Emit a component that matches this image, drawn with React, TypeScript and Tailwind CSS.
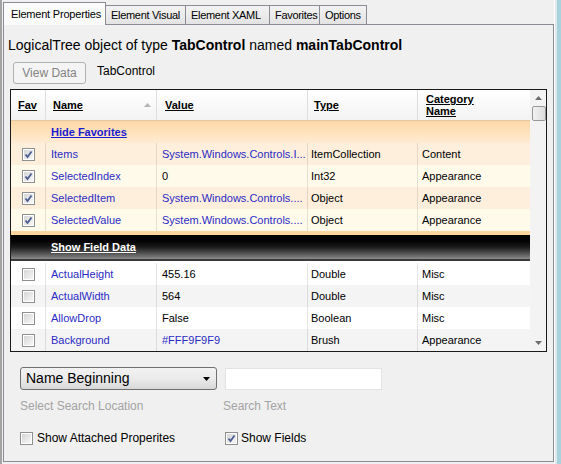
import React from "react";

type Row = {
  name: string;
  value: string;
  valueLink?: boolean;
  type: string;
  category: string;
  checked: boolean;
  bg: string;
};

const favRows: Row[] = [
  { name: "Items", value: "System.Windows.Controls.I...", valueLink: true, type: "ItemCollection", category: "Content", checked: true, bg: "bg-[#fdefdc]" },
  { name: "SelectedIndex", value: "0", type: "Int32", category: "Appearance", checked: true, bg: "bg-[#fffaea]" },
  { name: "SelectedItem", value: "System.Windows.Controls....", valueLink: true, type: "Object", category: "Appearance", checked: true, bg: "bg-[#fdefdc]" },
  { name: "SelectedValue", value: "System.Windows.Controls....", valueLink: true, type: "Object", category: "Appearance", checked: true, bg: "bg-[#fffaea]" },
];

const fieldRows: Row[] = [
  { name: "ActualHeight", value: "455.16", type: "Double", category: "Misc", checked: false, bg: "bg-white" },
  { name: "ActualWidth", value: "564", type: "Double", category: "Misc", checked: false, bg: "bg-[#f4f4f4]" },
  { name: "AllowDrop", value: "False", type: "Boolean", category: "Misc", checked: false, bg: "bg-white" },
  { name: "Background", value: "#FFF9F9F9", valueLink: true, type: "Brush", category: "Appearance", checked: false, bg: "bg-[#f4f4f4]" },
];

const CheckBox = ({ checked }: { checked: boolean }) => (
  <span className="w-[13px] h-[13px] border border-[#8e8f8f] bg-white p-[1px] flex shrink-0">
    <span className="flex-1 bg-gradient-to-br from-[#d6d6d6] to-[#f7f7f7] flex items-center justify-center">
      {checked && (
        <svg width="9" height="9" viewBox="0 0 9 9">
          <path d="M1.5 4.5 L3.5 7 L7.5 1.5" fill="none" stroke="#4b5c92" strokeWidth="1.8" />
        </svg>
      )}
    </span>
  </span>
);

const Tab = ({ label, w }: { label: string; w: string }) => (
  <div className={`${w} h-[19px] border border-l-0 border-b-0 border-[#898c95] bg-gradient-to-b from-[#f3f3f3] to-[#e3e3e3] pl-[5px] leading-[18px] text-[11px] tracking-[-0.3px] whitespace-nowrap overflow-hidden text-black`}>
    {label}
  </div>
);

const DataRow = ({ r }: { r: Row }) => (
  <div className={`flex h-[22px] items-center ${r.bg} text-[11px]`}>
    <div className="w-[35px] h-full flex items-center justify-center border-r border-black/10">
      <CheckBox checked={r.checked} />
    </div>
    <div className="w-[111px] h-full flex items-center pl-[5px] border-r border-black/10 text-[#2b2bc4]">{r.name}</div>
    <div className={`w-[151px] h-full flex items-center pl-[5px] border-r border-black/10 ${r.valueLink ? "text-[#2b2bc4]" : "text-black"}`}>
      {r.value}
    </div>
    <div className="w-[110px] h-full flex items-center pl-[3px] border-r border-black/10">{r.type}</div>
    <div className="w-[112px] h-full flex items-center pl-[4px]">{r.category}</div>
  </div>
);

const App = () => {
  return (
    <div className="w-[561px] h-[464px] bg-[#f0f0f0] flex overflow-hidden font-['Liberation_Sans',Arial,sans-serif] text-black">
      <div className="w-[2px] bg-[#a3a3a3]" />
      <div className="w-[552px] flex flex-col pl-[1px]">
        {/* tab strip */}
        <div className="h-[24px] flex items-end">
          <div className="w-[103px] h-[23px] border border-b-0 border-[#898c95] bg-[#fbfbfb] pl-[7px] pt-[3px] text-[11px] tracking-[-0.2px] whitespace-nowrap relative z-10 -mb-[1px]">
            Element Properties
          </div>
          <Tab label="Element Visual" w="w-[80px]" />
          <Tab label="Element XAML" w="w-[84px]" />
          <Tab label="Favorites" w="w-[50px]" />
          <Tab label="Options" w="w-[47px]" />
        </div>

        {/* tab page */}
        <div className="flex-1 mb-[2px] border border-[#898c95] bg-[#f0f0f0] flex flex-col pl-[4px]">
          <div className="mt-[10px] h-[20px] leading-[20px] text-[14px] whitespace-nowrap">
            LogicalTree object of type <b>TabControl</b> named <b>mainTabControl</b>
          </div>

          <div className="mt-[7px] h-[22px] flex items-center">
            <div className="ml-[5px] w-[73px] h-[22px] border border-[#adb2b5] rounded-[3px] bg-[#f4f4f4] flex items-center justify-center text-[12px] text-[#838383]">
              View Data
            </div>
            <div className="ml-[11px] -mt-[4px] text-[12px]">TabControl</div>
          </div>

          {/* grid */}
          <div className="mt-[5px] ml-[2px] w-[537px] h-[263px] border border-[#1a1a1a] bg-white flex">
            <div className="w-[519px] flex flex-col">
              <div className="h-[31px] flex bg-gradient-to-b from-white to-[#f3f3f3] border-b border-[#e2c9a3] text-[11px] font-bold underline">
                <div className="w-[35px] pl-[7px] flex items-center border-r border-[#dedede]">Fav</div>
                <div className="w-[111px] pl-[7px] flex items-center border-r border-[#dedede] relative">
                  Name
                  <svg className="absolute right-[5px] top-[13px]" width="7" height="4" viewBox="0 0 7 4">
                    <path d="M0 4 L3.5 0 L7 4 Z" fill="#b4b4b4" />
                  </svg>
                </div>
                <div className="w-[151px] pl-[8px] flex items-center border-r border-[#dedede]">Value</div>
                <div className="w-[110px] pl-[6px] flex items-center border-r border-[#dedede]">Type</div>
                <div className="w-[112px] pl-[8px] flex flex-col justify-center leading-[12px]">
                  <span>Category </span>
                  <span>Name</span>
                </div>
              </div>

              <div className="h-[22px] bg-gradient-to-b from-[#fcd8a6] to-[#ffebd2] flex items-center pl-[40px] text-[11px] font-bold underline text-[#1b1bd0]">
                Hide Favorites
              </div>
              {favRows.map((r) => (
                <DataRow key={r.name} r={r} />
              ))}

              <div className="h-[4px] bg-[#fcd69e]" />
              <div className="h-[24px] bg-gradient-to-b from-black via-[#1a1a1a] to-[#8c8c8c] flex items-center pl-[40px] text-[11px] font-bold underline text-white">
                Show Field Data
              </div>
              <div className="h-[2px] bg-[#3a3a3a]" />
              <div className="h-[2px] bg-white" />

              {fieldRows.map((r) => (
                <DataRow key={r.name} r={r} />
              ))}
            </div>

            {/* scrollbar */}
            <div className="w-[16px] bg-[#f3f3f3] flex flex-col items-center">
              <div className="h-[16px] w-full flex items-center justify-center">
                <svg width="7" height="4" viewBox="0 0 7 4">
                  <path d="M0 4 L3.5 0 L7 4 Z" fill="#6c6c6c" />
                </svg>
              </div>
              <div className="w-[14px] h-[15px] ml-[1px] border border-[#979797] rounded-[2px] bg-gradient-to-r from-[#f2f2f2] to-[#dcdcdc]" />
              <div className="flex-1" />
              <div className="h-[16px] w-full flex items-center justify-center">
                <svg width="7" height="4" viewBox="0 0 7 4">
                  <path d="M0 0 L3.5 4 L7 0 Z" fill="#6c6c6c" />
                </svg>
              </div>
            </div>
          </div>

          {/* search area */}
          <div className="mt-[15px] flex items-center">
            <div className="ml-[12px] w-[197px] h-[23px] border border-[#707070] rounded-[3px] bg-gradient-to-b from-[#f2f2f2] via-[#ebebeb] to-[#d8d8d8] flex items-center pl-[5px] pr-[6px] text-[14px]">
              <span className="flex-1">Name Beginning</span>
              <svg width="7" height="4" viewBox="0 0 7 4">
                <path d="M0 0 L3.5 4 L7 0 Z" fill="#000" />
              </svg>
            </div>
            <div className="ml-[8px] w-[157px] h-[22px] border border-[#e3e3e3] bg-white" />
          </div>

          <div className="mt-[9px] h-[14px] flex items-center text-[12px] text-[#a3a3a3]">
            <span className="ml-[12px] w-[203px]">Select Search Location</span>
            <span>Search Text</span>
          </div>

          <div className="mt-[18px] h-[14px] flex items-center text-[12px]">
            <div className="ml-[12px] w-[205px] flex items-center gap-[4px]">
              <CheckBox checked={false} />
              <span>Show Attached Properites</span>
            </div>
            <div className="flex items-center gap-[3px]">
              <CheckBox checked={true} />
              <span>Show Fields</span>
            </div>
          </div>
        </div>
      </div>
      <div className="w-[1px] bg-white" />
      <div className="w-[2px] bg-[#dfe9ec]" />
      <div className="flex-1 bg-[#a9d3dc]" />
    </div>
  );
};

export default App;
